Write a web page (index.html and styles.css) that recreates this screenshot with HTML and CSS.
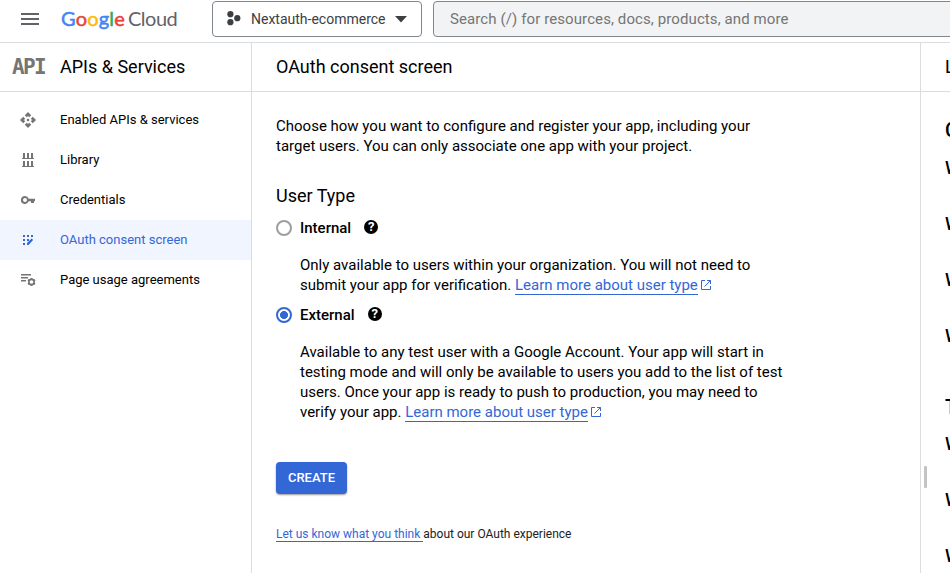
FILE: index.html
```html
<!DOCTYPE html>
<html lang="en">
<head>
<meta charset="utf-8">
<title>OAuth consent screen</title>
<link rel="stylesheet" href="styles.css">
</head>
<body>
<header class="topbar">
  <svg class="menu" width="18" height="12" viewBox="0 0 18 12"><path d="M0 0h18v2H0zM0 5h18v2H0zM0 10h18v2H0z"/></svg>
  <div class="brand"><span class="google"><span class="b">G</span><span class="r">o</span><span class="y">o</span><span class="b">g</span><span class="g">l</span><span class="r">e</span></span><span class="cloud">Cloud</span></div>
  <div class="project">
    <svg width="14" height="16" viewBox="0 0 14 16"><circle cx="3.4" cy="3.2" r="3.1"/><circle cx="10.3" cy="7.2" r="3.1"/><circle cx="3.4" cy="11.2" r="3.1"/></svg>
    <span class="project-name">Nextauth-ecommerce</span>
    <svg class="caret" width="12" height="7" viewBox="0 0 12 7"><path d="M0 0h12L6 6.5z"/></svg>
  </div>
  <div class="search">Search (/) for resources, docs, products, and more</div>
</header>
<div class="shell">
  <nav class="sidebar">
    <div class="product"><span class="api">API</span><span class="product-name">APIs &amp; Services</span></div>
    <ul class="nav">
      <li><svg width="16" height="16" viewBox="0 0 16 16"><path d="M8 0l3.200 3.200-2 2L8 4 6.800 5.200l-2-2zM8 16l3.200-3.200-2-2L8 12l-1.200-1.200-2 2zM0 8l3.200-3.200 2 2L4 8l1.200 1.200-2 2zM16 8l-3.200-3.200-2 2L12 8l-1.200 1.200 2 2z"/><circle cx="8" cy="8" r="1.300"/></svg><span>Enabled APIs &amp; services</span></li>
      <li><svg width="16" height="16" viewBox="0 0 16 16"><path d="M3 1h2v5h2V1h2v5h2V1h2v5h1v1H2V6h1zM3 9h2v5h2V9h2v5h2V9h2v5h1v1H2v-1h1z"/></svg><span>Library</span></li>
      <li><svg width="16" height="16" viewBox="0 0 16 16"><path fill-rule="evenodd" d="M5 4a4 4 0 1 0 3.700 5.300H11V11h3V9.300h1V6.700H8.700A4 4 0 0 0 5 4zm0 2a2 2 0 1 1 0 4 2 2 0 0 1 0-4z"/></svg><span>Credentials</span></li>
      <li class="active"><svg width="16" height="16" viewBox="0 0 16 16"><path d="M3 3h2v2H3zM7 3h2v2H7zM11 3h2v2h-2zM3 7h2v2H3zM7 7h2v2H7zM3 11h2v2H3zM7 13v-2l4.600-4.600 1.500 1.500L8.500 13z"/></svg><span>OAuth consent screen</span></li>
      <li><svg width="16" height="16" viewBox="0 0 16 16"><path d="M1 2h10v1.500H1zM1 5h7v1.500H1zM1 8h5v1.500H1z"/><circle cx="11.500" cy="10" r="2.600" fill="none" stroke="#757575" stroke-width="1.600"/><path d="M10.500 6h2v1.500h-2zM10.500 12.500h2V14h-2zM7.500 8.700l1-1.700 1.300.8-1 1.700zM15.500 8.700l-1-1.700-1.300.8 1 1.700zM7.500 11.300l1 1.700 1.300-.8-1-1.700zM15.500 11.300l-1 1.700-1.300-.8 1-1.700z"/></svg><span>Page usage agreements</span></li>
    </ul>
  </nav>
  <main class="main">
    <h1>OAuth consent screen</h1>
    <div class="content">
      <p class="intro">Choose how you want to configure and register your app, including your<br>target users. You can only associate one app with your project.</p>
      <h2>User Type</h2>
      <div class="option"><span class="radio"></span><b>Internal</b><span class="help">?</span></div>
      <p class="detail">Only available to users within your organization. You will not need to<br>submit your app for verification. <a>Learn more about user type</a><svg class="ext" width="10" height="10" viewBox="0 0 10 10"><path d="M4 .5H.5v9h9V6M6 .5h3.500V4M9.500.5l-6 6"/></svg></p>
      <div class="option"><span class="radio checked"></span><b>External</b><span class="help">?</span></div>
      <p class="detail">Available to any test user with a Google Account. Your app will start in<br>testing mode and will only be available to users you add to the list of test<br>users. Once your app is ready to push to production, you may need to<br>verify your app. <a>Learn more about user type</a><svg class="ext" width="10" height="10" viewBox="0 0 10 10"><path d="M4 .5H.5v9h9V6M6 .5h3.500V4M9.500.5l-6 6"/></svg></p>
      <button class="create">CREATE</button>
      <p class="feedback"><a>Let us know what you think&nbsp;</a>about our OAuth experience</p>
    </div>
  </main>
  <aside class="panel">
    <div class="panel-title">L</div>
    <div class="panel-body">
      <span class="grip"></span>
      <h3>C</h3>
      <p>W</p><p>W</p><p>W</p><p>W</p>
      <h3 class="second">T</h3>
      <p>W</p><p>W</p><p>W</p>
    </div>
  </aside>
</div>
</body>
</html>
```
FILE: styles.css
```css
* { box-sizing: border-box; margin: 0; padding: 0; }
body { height: 573px; overflow: hidden; background: #fff; color: #000; font-family: Roboto, "Liberation Sans", sans-serif; }
.topbar { display: flex; align-items: flex-start; height: 43px; border-bottom: 1px solid #dadce0; overflow: hidden; }
.menu { flex: none; margin: 13px 0 0 21px; fill: #5f6368; }
.brand { flex: none; display: flex; gap: 4px; width: 151px; margin-left: 22px; padding-top: 6px; font: 20px/24px Lato, sans-serif; color: #5f6368; }
.google { width: 63px; letter-spacing: .2px; -webkit-text-stroke: .5px; }
.cloud { letter-spacing: -.5px; }
.b { color: #4285f4; } .r { color: #ea4335; } .y { color: #fbbc04; } .g { color: #34a853; }
.project { flex: none; display: flex; align-items: center; width: 210px; height: 36px; margin-top: 1px; padding-left: 14px; border: 1px solid #80868b; border-radius: 4px; color: #3c4043; fill: #3c4043; font-size: 14px; }
.project-name { width: 134px; margin: 0 10px 0 10px; white-space: nowrap; }
.search { flex: none; width: 560px; height: 36px; margin: 1px 0 0 11px; padding-left: 16px; border: 1px solid #80868b; border-radius: 4px; background: #f1f3f4; color: #757575; font-size: 15px; line-height: 34px; letter-spacing: .1px; }
.shell { display: flex; height: 530px; width: 950px; overflow: hidden; }
.sidebar { flex: none; width: 252px; border-right: 1px solid #dadce0; }
.product { display: flex; align-items: center; height: 49px; border-bottom: 1px solid #dadce0; font-size: 18px; }
.product-name { padding-bottom: 2px; }
.api { width: 48px; margin-left: 12px; color: #757575; font: bold 21px/20px "DejaVu Sans Mono", monospace; letter-spacing: -1.600px; }
.nav { list-style: none; padding-top: 8px; }
.nav li { display: flex; align-items: center; gap: 24px; height: 40px; padding-left: 20px; font-size: 13px; fill: #757575; }
.nav span { padding-bottom: 2px; }
.nav .active { background: #f0f5ff; color: #3367d6; fill: #3367d6; }
.main { flex: none; width: 668px; }
h1 { height: 49px; padding-left: 24px; border-bottom: 1px solid #dadce0; font-size: 18px; font-weight: 400; line-height: 48px; }
.content { padding: 24px 0 0 24px; }
.intro, .detail { font-size: 15px; line-height: 20px; white-space: nowrap; }
h2 { height: 24px; margin: 28px 0 10px; font-size: 18px; font-weight: 400; line-height: 24px; }
.option { display: flex; align-items: center; height: 20px; font-size: 15px; }
.option b { margin: 0 13px 0 8px; font-weight: 500; }
.radio { width: 16px; height: 16px; border: 2px solid #9e9e9e; border-radius: 50%; }
.radio.checked { border-color: #3367d6; background: radial-gradient(circle, #3367d6 3.700px, #fff 4.300px); }
.help { width: 14px; height: 14px; margin-bottom: 2px; border-radius: 50%; background: #000; color: #fff; font-size: 13px; font-weight: 700; line-height: 14px; text-align: center; }
.detail { margin: 17px 0 10px 24px; }
a { color: #3367d6; border-bottom: 1px solid #3367d6; }
.ext { margin-left: 3px; fill: none; stroke: #3367d6; }
.create { display: block; width: 71px; height: 32px; margin-top: 40px; border: 0; border-radius: 4px; background: #3367d6; box-shadow: 0 1px 2px rgba(0,0,0,.4); color: #fff; font: 500 13px/32px Roboto, sans-serif; }
.feedback { margin-top: 32px; font-size: 12px; line-height: 16px; color: #212121; }
.panel { flex: none; width: 50px; border-left: 1px solid #dadce0; overflow: hidden; }
.panel-title { height: 49px; padding-left: 24px; border-bottom: 1px solid #dadce0; font-size: 18px; line-height: 48px; }
.panel-body { position: relative; padding: 26px 0 0 24px; }
.grip { position: absolute; left: 3px; top: 374px; width: 3px; height: 22px; border-radius: 1px; background: #c4c4c4; }
h3 { height: 24px; font-size: 20px; font-weight: 500; line-height: 24px; }
.second { margin-top: 49px; }
.panel p { height: 20px; margin: 16px 0 36px; font-size: 18px; line-height: 20px; font-weight: 500; }
.panel h3 + p { margin-top: 16px; }
.panel .second + p { margin-top: 15px; }
```
